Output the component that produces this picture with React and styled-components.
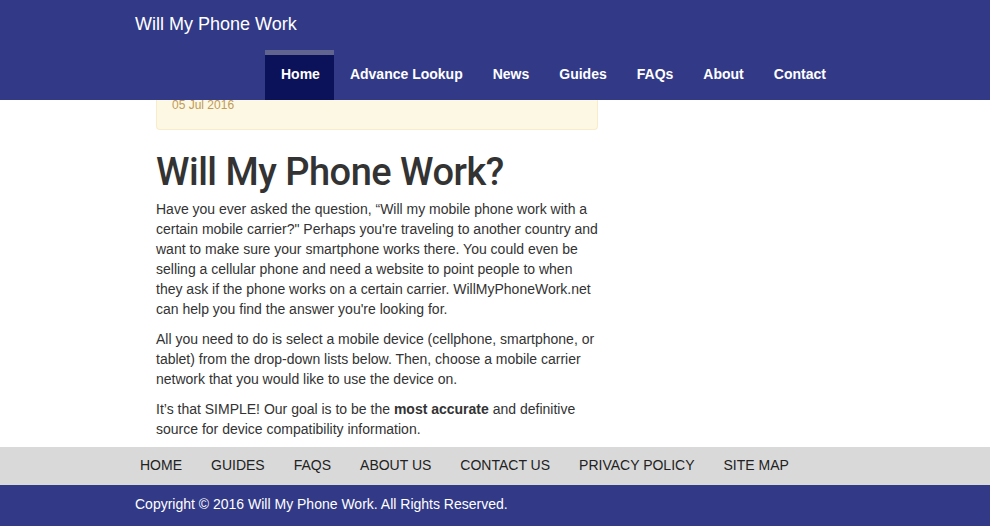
import React from 'react';
import styled, { createGlobalStyle } from 'styled-components';

const GlobalStyle = createGlobalStyle`
  html, body {
    margin: 0;
    padding: 0;
    background: #fff;
    font-family: "Liberation Sans", Arial, sans-serif;
    color: #333;
    overflow: hidden;
  }
`;

const Header = styled.header`
  background-color: #323a88;
  height: 100px;
  padding: 0 0 0 135px;
  display: flex;
  flex-direction: column;
`;

const Brand = styled.div`
  color: #fff;
  font-size: 18px;
  line-height: 20px;
  padding-top: 14px;
  height: 36px;
`;

const Nav = styled.nav`
  display: flex;
  padding-left: 130px;
`;

const NavLink = styled.a`
  display: block;
  height: 50px;
  box-sizing: border-box;
  margin-right: ${(p) => (p.active ? '1px' : '0')};
  line-height: 38px;
  font-size: 14px;
  font-weight: bold;
  color: #fff;
  text-decoration: none;
  background-color: ${(p) => (p.active ? '#0b1259' : 'transparent')};
  border-top: 5px solid ${(p) => (p.active ? '#60648f' : 'transparent')};
  padding-left: ${(p) => (p.active ? '16px' : '15px')};
  padding-right: ${(p) => (p.active ? '14px' : '15px')};
`;

const Main = styled.main`
  width: 442px;
  margin-left: 156px;
`;

const DateBox = styled.div`
  background-color: #fcf8e3;
  border: 1px solid #faebcc;
  border-top: none;
  border-radius: 0 0 4px 4px;
  padding: 0 15px 18px;
  font-size: 12px;
  line-height: 11px;
  color: #c29a5a;
`;

const Title = styled.h1`
  font-family: Roboto, "Liberation Sans", Arial, sans-serif;
  font-size: 38px;
  font-weight: 500;
  letter-spacing: -0.5px;
  line-height: 44px;
  color: #333;
  margin: 20px 0 5px;
`;

const Para = styled.p`
  font-size: 14px;
  line-height: 20px;
  color: #333;
  margin: 0 0 10px;

  &:last-child {
    margin-bottom: 8px;
  }
`;

const FooterNav = styled.div`
  background-color: #d9d9d9;
  height: 38px;
  box-sizing: border-box;
  display: flex;
  align-items: center;
  padding: 0 0 3px 140px;
`;

const FooterLink = styled.a`
  font-size: 14px;
  color: #222;
  text-transform: uppercase;
  text-decoration: none;
  margin-right: 29px;
`;

const Copyright = styled.div`
  background-color: #323a88;
  color: #fff;
  font-size: 14px;
  height: 41px;
  line-height: 38px;
  padding-left: 135px;
`;

const navItems = ['Home', 'Advance Lookup', 'News', 'Guides', 'FAQs', 'About', 'Contact'];
const footerItems = ['Home', 'Guides', 'FAQs', 'About Us', 'Contact Us', 'Privacy Policy', 'Site Map'];

export default function App() {
  return (
    <>
      <GlobalStyle />
      <Header>
        <Brand>Will My Phone Work</Brand>
        <Nav>
          {navItems.map((item, i) => (
            <NavLink key={item} href="#" active={i === 0 ? 1 : 0}>
              {item}
            </NavLink>
          ))}
        </Nav>
      </Header>

      <Main>
        <DateBox>05 Jul 2016</DateBox>
        <Title>Will My Phone Work?</Title>
        <Para>
          Have you ever asked the question, “Will my mobile phone work with a certain mobile carrier?"
          Perhaps you're traveling to another country and want to make sure your smartphone works
          there. You could even be selling a cellular phone and need a website to point people to
          when they ask if the phone works on a certain carrier. WillMyPhoneWork.net can help you find
          the answer you're looking for.
        </Para>
        <Para>
          All you need to do is select a mobile device (cellphone, smartphone, or tablet) from the
          drop-down lists below. Then, choose a mobile carrier network that you would like to use the
          device on.
        </Para>
        <Para>
          It’s that SIMPLE! Our goal is to be the <strong>most accurate</strong> and definitive
          source for device compatibility information.
        </Para>
      </Main>

      <FooterNav>
        {footerItems.map((item) => (
          <FooterLink key={item} href="#">
            {item}
          </FooterLink>
        ))}
      </FooterNav>
      <Copyright>Copyright © 2016 Will My Phone Work. All Rights Reserved.</Copyright>
    </>
  );
}
